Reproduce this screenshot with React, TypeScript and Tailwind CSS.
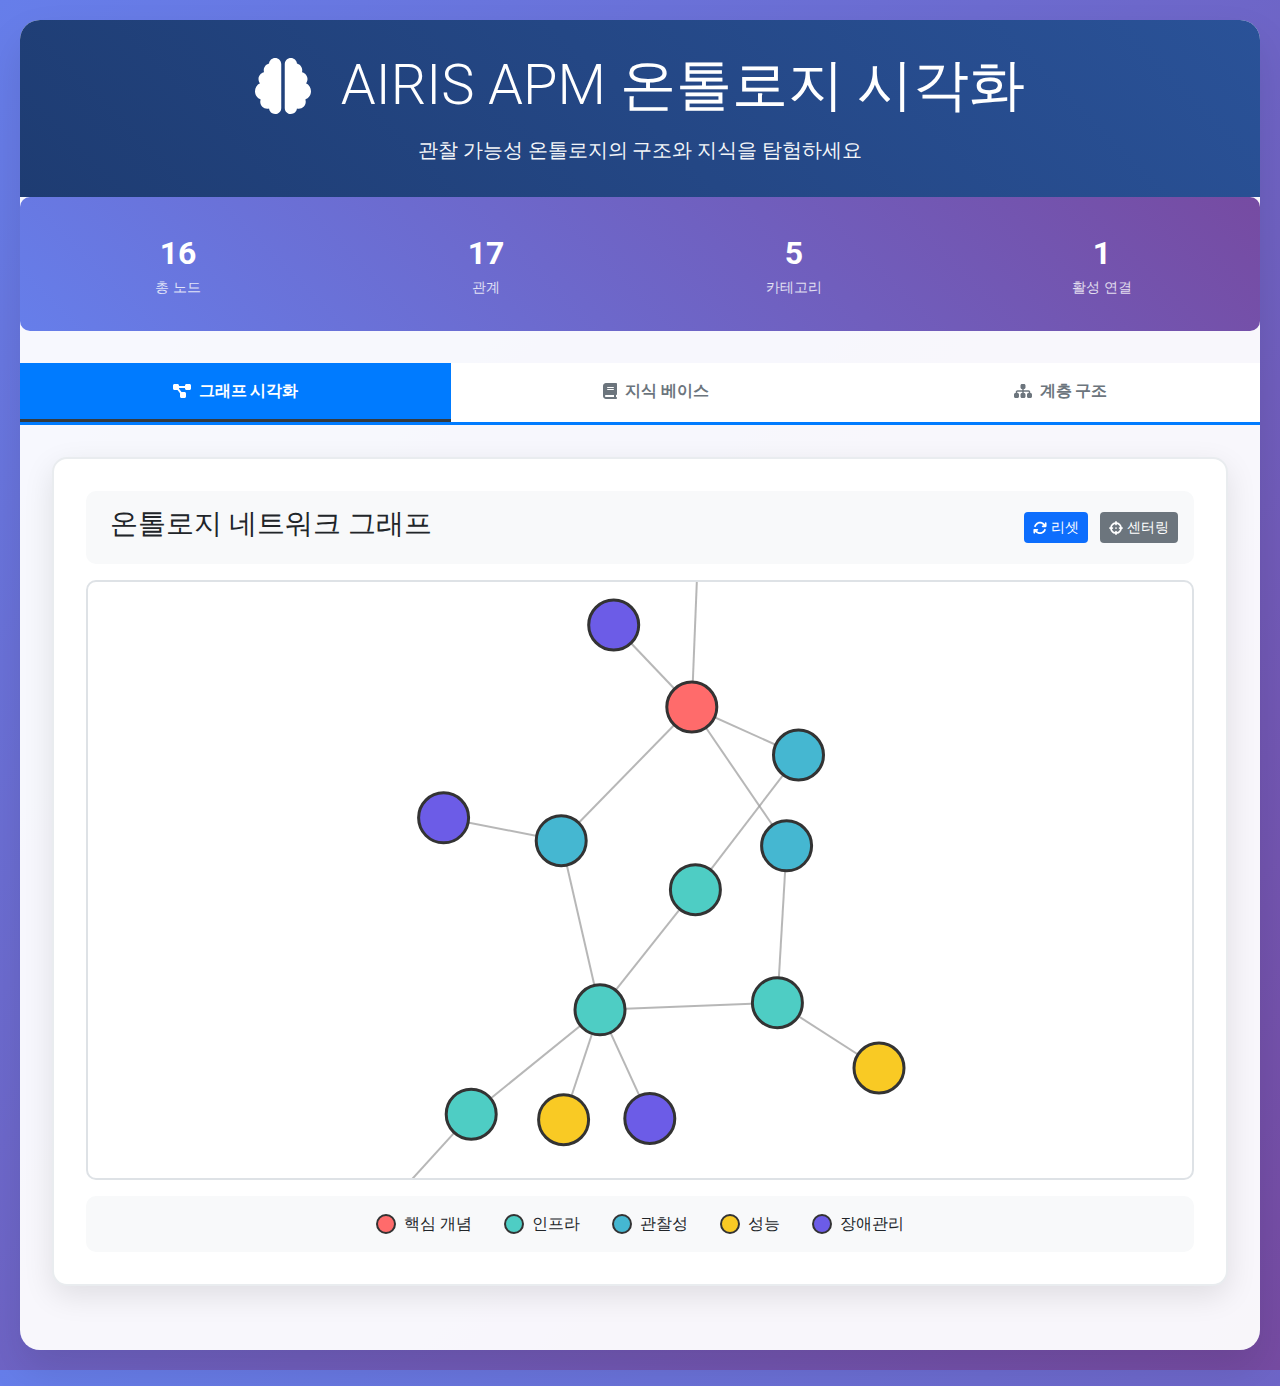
import { FaBrain, FaDiagramProject, FaBook, FaSitemap, FaArrowsRotate, FaCrosshairs } from 'react-icons/fa6';

const colors = { core: '#ff6b6b', infra: '#4ecdc4', obs: '#45b7d1', perf: '#f9ca24', fault: '#6c5ce7' };

const stats = [
  { value: '16', label: '총 노드' },
  { value: '17', label: '관계' },
  { value: '5', label: '카테고리' },
  { value: '1', label: '활성 연결' },
];

const links = [
  [613.7, 625, 691.8, 707],
  [697.3, 570, 691.8, 707],
  [691.8, 707, 798.5, 755],
  [691.8, 707, 786.6, 845.8],
  [691.8, 707, 561.2, 840.7],
  [443.6, 817.8, 561.2, 840.7],
  [798.5, 755, 695.4, 889.7],
  [561.2, 840.7, 600, 1009.8],
  [695.4, 889.7, 600, 1009.8],
  [786.6, 845.8, 777.4, 1002.7],
  [600, 1009.8, 777.4, 1002.7],
  [777.4, 1002.7, 879, 1068],
  [600, 1009.8, 471.2, 1114.2],
  [600, 1009.8, 563.6, 1119.7],
  [600, 1009.8, 649.8, 1118.4],
  [471.2, 1114.2, 404, 1188],
];

const nodes: [number, number, string][] = [
  [613.7, 625, colors.fault],
  [691.8, 707, colors.core],
  [798.5, 755, colors.obs],
  [443.6, 817.8, colors.fault],
  [561.2, 840.7, colors.obs],
  [786.6, 845.8, colors.obs],
  [695.4, 889.7, colors.infra],
  [600, 1009.8, colors.infra],
  [777.4, 1002.7, colors.infra],
  [879, 1068, colors.perf],
  [471.2, 1114.2, colors.infra],
  [563.6, 1119.7, colors.perf],
  [649.8, 1118.4, colors.fault],
];

const legend = [
  { label: '핵심 개념', color: colors.core },
  { label: '인프라', color: colors.infra },
  { label: '관찰성', color: colors.obs },
  { label: '성능', color: colors.perf },
  { label: '장애관리', color: colors.fault },
];

function Header() {
  return (
    <header className="h-[177px] bg-[linear-gradient(45deg,#1e3c72,#2a5298)] pt-8 text-center text-white">
      <h1 className="flex h-[67px] items-center justify-center text-[56px] leading-[67px] font-light whitespace-pre">
        <FaBrain className="mr-[30px] size-14" />
        AIRIS APM 온톨로지 시각화
      </h1>
      <p className="mt-4 text-[20px] leading-[30px] font-light opacity-95">관찰 가능성 온톨로지의 구조와 지식을 탐험하세요</p>
    </header>
  );
}

function Stats() {
  return (
    <section className="grid h-[134px] grid-cols-4 gap-6 rounded-[10px] bg-[linear-gradient(45deg,#667eea,#764ba2)] px-4 pt-8 text-center text-white">
      {stats.map((s) => (
        <div key={s.label}>
          <div className="text-[32px] leading-[48px] font-bold">{s.value}</div>
          <div className="text-[14px] leading-[21px] opacity-80">{s.label}</div>
        </div>
      ))}
    </section>
  );
}

function Tabs() {
  return (
    <nav className="mt-8 flex h-[62px] border-b-[3px] border-[#007bff] bg-white text-[16px] font-semibold text-[#6c757d]">
      <button className="flex w-[431px] items-center justify-center border-b-[3px] border-[#343a40] bg-[#007bff] text-white">
        <FaDiagramProject className="mr-2 h-4 w-[18px]" />그래프 시각화
      </button>
      <button className="flex w-[410px] items-center justify-center border-b-[3px] border-transparent">
        <FaBook className="mr-2 h-4 w-[14px]" />지식 베이스
      </button>
      <button className="flex flex-1 items-center justify-center border-b-[3px] border-transparent">
        <FaSitemap className="mr-2 h-4 w-[18px]" />계층 구조
      </button>
    </nav>
  );
}

function Graph() {
  return (
    <div className="mt-4 h-[600px] overflow-hidden rounded-[10px] border-2 border-[#dee2e6] bg-white">
      <svg width="1104" height="596" viewBox="88 582 1104 596" className="block">
        <g stroke="#999" strokeOpacity="0.7" strokeWidth="2">
          {links.map(([x1, y1, x2, y2], i) => (
            <line key={i} x1={x1} y1={y1} x2={x2} y2={y2} />
          ))}
        </g>
        <g stroke="#333" strokeWidth="3">
          {nodes.map(([cx, cy, fill], i) => (
            <circle key={i} cx={cx} cy={cy} r="25" fill={fill} />
          ))}
        </g>
      </svg>
    </div>
  );
}

export default function App() {
  return (
    <div className="h-[1386px] overflow-hidden bg-[linear-gradient(135deg,#667eea,#764ba2)] bg-[length:100%_1370px] p-5 font-[Roboto,sans-serif] text-[#212529]">
      <div className="h-[1330px] overflow-hidden rounded-[20px] bg-white/95 shadow-[0_20px_40px_rgba(0,0,0,0.1)]">
        <Header />
        <Stats />
        <Tabs />
        <main className="p-8">
          <section className="rounded-[15px] border-2 border-[#e9ecef] bg-white p-8 shadow-[0_10px_30px_rgba(0,0,0,0.1)]">
            <div className="flex h-[73px] items-center justify-between rounded-[10px] bg-[#f8f9fa] pr-4 pl-6">
              <h2 className="mb-2 text-[28px] leading-[34px] font-medium">온톨로지 네트워크 그래프</h2>
              <div className="flex gap-3 text-[14px] leading-[21px] text-white">
                <button className="flex h-[31px] items-center rounded bg-[#0d6efd] px-[9px]">
                  <FaArrowsRotate className="mr-1 size-[14px]" />리셋
                </button>
                <button className="flex h-[31px] items-center rounded bg-[#6c757d] px-[9px]">
                  <FaCrosshairs className="mr-1 size-[14px]" />센터링
                </button>
              </div>
            </div>
            <Graph />
            <div className="mt-4 flex h-14 items-center justify-center gap-8 rounded-[10px] bg-[#f8f9fa] text-[16px] font-medium">
              {legend.map((l) => (
                <div key={l.label} className="flex items-center gap-2">
                  <span className="size-5 rounded-full border-2 border-[#333]" style={{ backgroundColor: l.color }} />
                  {l.label}
                </div>
              ))}
            </div>
          </section>
        </main>
      </div>
    </div>
  );
}
